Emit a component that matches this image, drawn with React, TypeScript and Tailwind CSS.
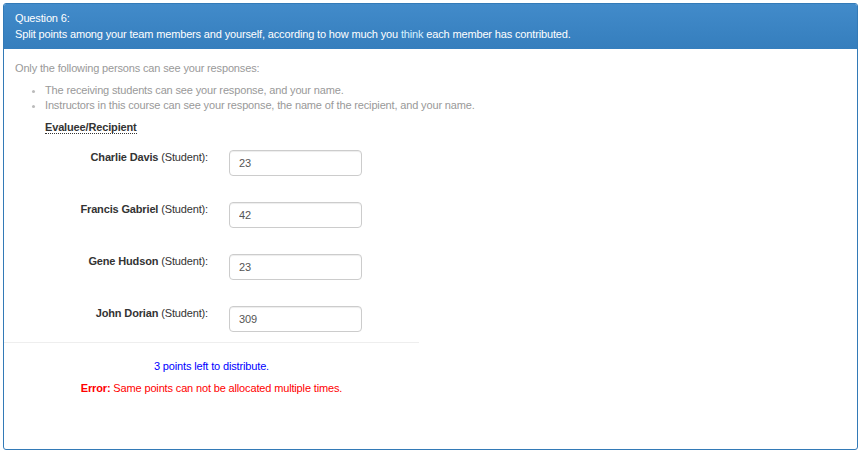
const members = [
	{ name: "Charlie Davis", points: "23" },
	{ name: "Francis Gabriel", points: "42" },
	{ name: "Gene Hudson", points: "23" },
	{ name: "John Dorian", points: "309" },
];

const App = () => {
	return (
		<div className="w-[865px] h-[459px] bg-white pt-[3px] pl-[3px] font-['Liberation_Sans',Arial,sans-serif] text-[11px] tracking-[-0.15px]">
			<div className="w-[855px] h-[447px] border border-[#337ab7] rounded-[3px] overflow-hidden flex flex-col">
				<div className="h-[45px] px-[11px] pt-[6px] bg-gradient-to-b from-[#428bca] to-[#357ebd] text-white leading-[16px]">
					<p>Question 6:</p>
					<p>
						Split points among your team members and yourself, according to how much you{" "}
						<span className="text-[#d4f1ff]">think</span> each member has contributed.
					</p>
				</div>

				<div className="flex-1 flex flex-col pt-[11px]">
					<p className="px-[11px] text-[#999] leading-[16px]">Only the following persons can see your responses:</p>
					<ul className="mt-[7px] pl-[41px] text-[#999] leading-[15px] list-disc marker:text-[#bbb]">
						<li>The receiving students can see your response, and your name.</li>
						<li>Instructors in this course can see your response, the name of the recipient, and your name.</li>
					</ul>
					<div className="mt-[6px] pl-[41px]">
						<span className="font-bold text-[#333] leading-[16px] border-b border-dotted border-[#333]">
							Evaluee/Recipient
						</span>
					</div>

					<div className="mt-[14px] flex flex-col gap-[26px]">
						{members.map((m) => (
							<div key={m.name} className="flex items-start">
								<label className="w-[204px] text-right text-[#333] leading-[14px]">
									<span className="font-bold">{m.name}</span> (Student):
								</label>
								<input
									readOnly
									value={m.points}
									className="ml-[21px] w-[133px] h-[26px] border border-[#ccc] rounded-[4px] px-[9px] text-[11px] text-[#555] shadow-[inset_0_1px_1px_rgba(0,0,0,0.075)] outline-none"
								/>
							</div>
						))}
					</div>

					<div className="mt-[10px] w-[415px] border-t border-[#eee]" />
					<div className="w-[415px] flex flex-col items-center">
						<p className="mt-[15px] text-[#0000ff] leading-[16px]">3 points left to distribute.</p>
						<p className="mt-[6px] text-[#ff0000] leading-[16px]">
							<span className="font-bold">Error:</span> Same points can not be allocated multiple times.
						</p>
					</div>
				</div>
			</div>
		</div>
	);
};

export default App;
